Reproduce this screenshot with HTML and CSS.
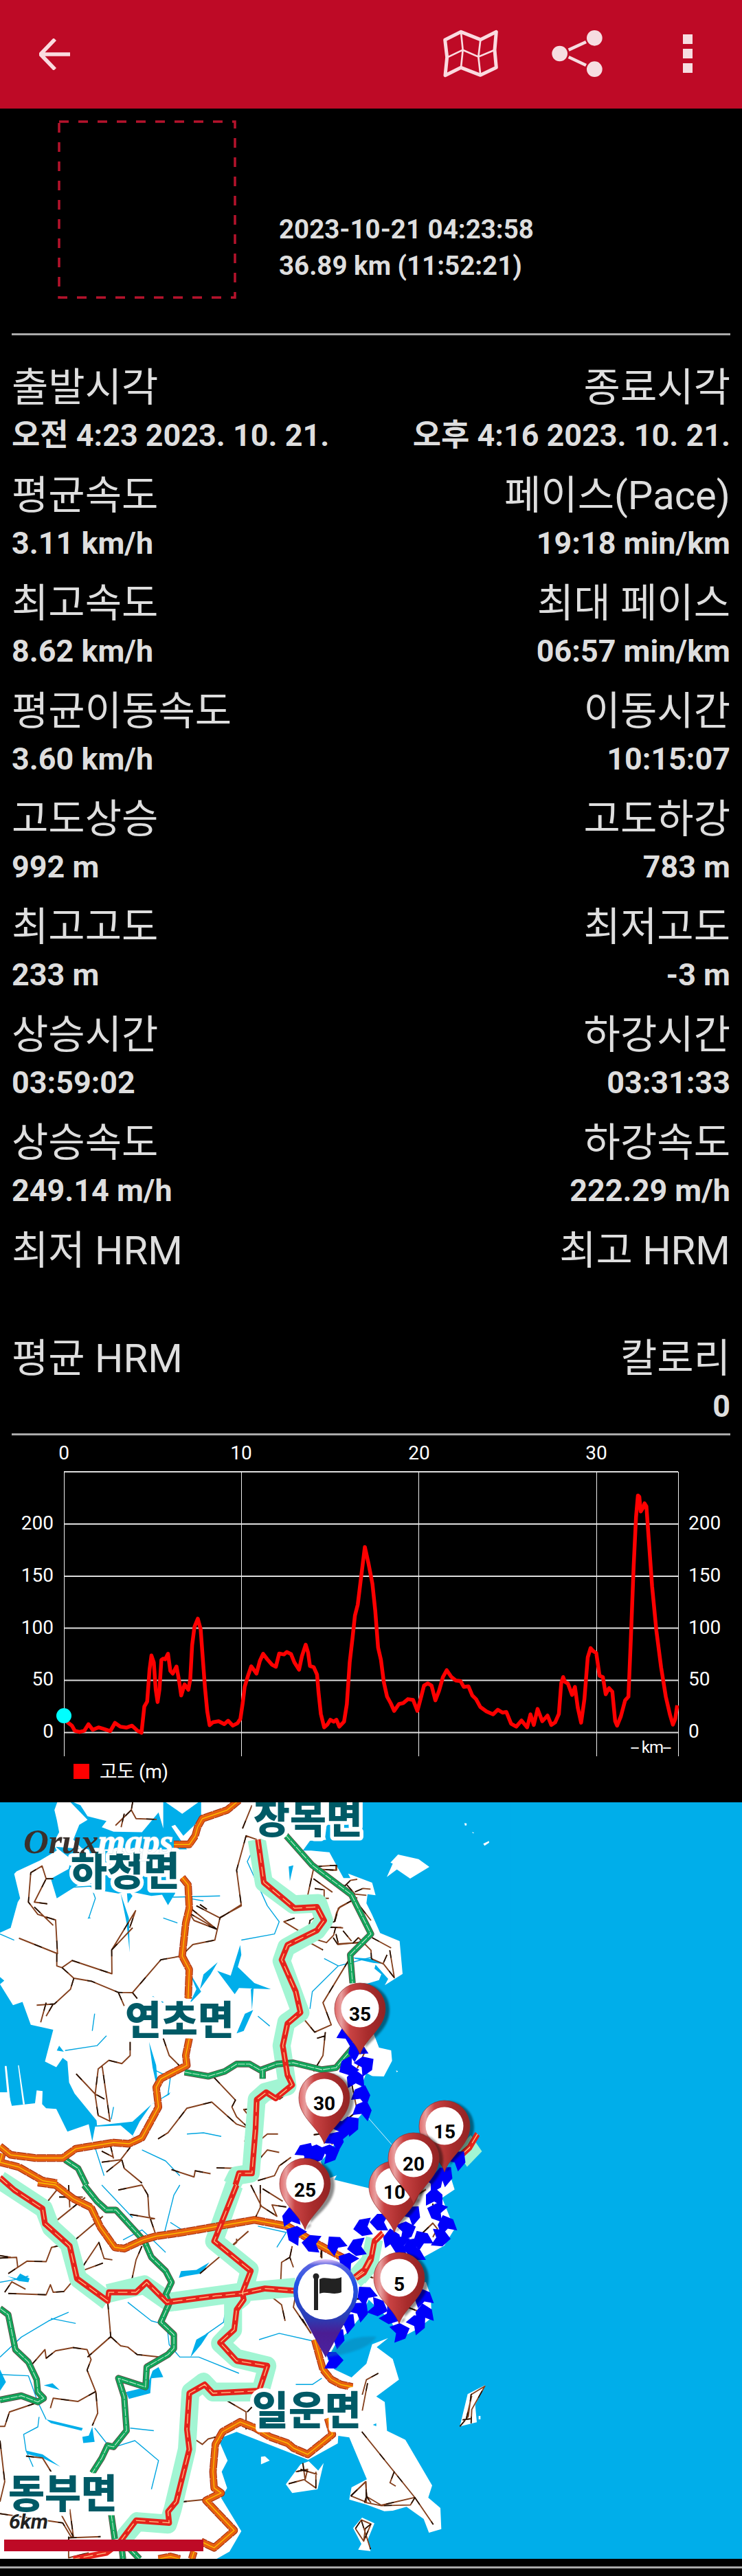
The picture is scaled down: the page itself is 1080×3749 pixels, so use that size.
FILE: index.html
```html
<!DOCTYPE html>
<html lang="ko">
<head>
<meta charset="utf-8">
<title>OruxMaps</title>
<link rel="stylesheet" href="styles.css">
</head>
<body>
<header class="bar">
  <svg class="icon-back" viewBox="0 0 46 46"><path d="M23 1 2 23 23 45M3 23H45"/></svg>
  <svg class="icon-actions" viewBox="620 20 460 120">
    <g transform="translate(620 20) scale(.33333)">
      <path class="map-edge" d="M83 114 153 79 238 113 307 79 300 158 307 235 238 268 153 235 84 269 92 190Z"/>
      <path class="map-fold" d="M153 80 161 158 153 235M238 114 229 188 238 268M94 190 161 158 229 188 300 158"/>
      <path class="share-line" d="M623 158 699 123M623 189 699 225"/>
      <g class="solid"><circle cx="584" cy="174" r="34"/><circle cx="736" cy="106" r="34"/><circle cx="736" cy="242" r="34"/><path d="M1122 90h42v42h-42zM1122 153h42v42h-42zM1122 216h42v42h-42z"/></g>
    </g>
  </svg>
</header>

<section class="summary">
  <svg class="photo" viewBox="0 0 260 260"><rect x="2" y="2" width="256" height="256"/></svg>
  <div class="summary-text"><p>2023-10-21 04:23:58</p><p>36.89 km (11:52:21)</p></div>
</section>

<dl class="stats">
  <div><dt>출발시각</dt><dd>오전 4:23 2023. 10. 21.</dd></div><div><dt>종료시각</dt><dd>오후 4:16 2023. 10. 21.</dd></div>
  <div><dt>평균속도</dt><dd>3.11 km/h</dd></div><div><dt>페이스(Pace)</dt><dd>19:18 min/km</dd></div>
  <div><dt>최고속도</dt><dd>8.62 km/h</dd></div><div><dt>최대 페이스</dt><dd>06:57 min/km</dd></div>
  <div><dt>평균이동속도</dt><dd>3.60 km/h</dd></div><div><dt>이동시간</dt><dd>10:15:07</dd></div>
  <div><dt>고도상승</dt><dd>992 m</dd></div><div><dt>고도하강</dt><dd>783 m</dd></div>
  <div><dt>최고고도</dt><dd>233 m</dd></div><div><dt>최저고도</dt><dd>-3 m</dd></div>
  <div><dt>상승시간</dt><dd>03:59:02</dd></div><div><dt>하강시간</dt><dd>03:31:33</dd></div>
  <div><dt>상승속도</dt><dd>249.14 m/h</dd></div><div><dt>하강속도</dt><dd>222.29 m/h</dd></div>
  <div><dt>최저 HRM</dt><dd></dd></div><div><dt>최고 HRM</dt><dd></dd></div>
  <div><dt>평균 HRM</dt><dd></dd></div><div><dt>칼로리</dt><dd>0</dd></div>
</dl>

<svg class="chart" viewBox="0 2089 1080 534">
  <path class="grid" d="M93 2142H987M93 2218H987M93 2294H987M93 2369.500H987M93 2445.500H987M93 2521.500H987"/>
  <path class="grid thin" d="M93.500 2142V2556M351.500 2142V2556M609.500 2142V2556M868.500 2142V2556M987.500 2142V2556"/>
  <g class="mid"><text x="93" y="2124">0</text><text x="351" y="2124">10</text><text x="610" y="2124">20</text><text x="868" y="2124">30</text></g>
  <g class="end"><text x="78" y="2226">200</text><text x="78" y="2302">150</text><text x="78" y="2377.500">100</text><text x="78" y="2453">50</text><text x="78" y="2529">0</text></g>
  <g><text x="1002" y="2226">200</text><text x="1002" y="2302">150</text><text x="1002" y="2377.500">100</text><text x="1002" y="2453">50</text><text x="1002" y="2529">0</text></g>
  <g transform="translate(0 2080) scale(.68878 .35714)"><path class="track" d="M135 1168 143 1195 152 1208 158 1229 168 1234 178 1229 187 1202 196 1225 208 1215 220 1222 233 1230 243 1197 254 1212 267 1216 279 1208 290 1228 299 1237 305 1130 311 1110 316 980 320 922 325 950 329 1060 333 1112 337 1060 341 940 345 935 349 938 355 915 360 985 365 996 373 967 378 1020 383 1085 390 1040 398 1062 402 1020 406 880 411 805 418 772 424 815 428 920 433 1050 438 1150 443 1206 450 1194 462 1190 474 1202 482 1188 492 1208 502 1198 508 1180 513 1115 517 1050 524 1005 531 966 542 996 549 945 556 915 565 938 575 960 583 968 590 914 600 918 606 908 615 916 622 950 632 980 638 925 646 878 651 910 655 965 663 970 670 1000 673 1070 678 1160 685 1215 692 1203 698 1184 705 1192 711 1184 717 1212 727 1192 733 1120 739 950 745 850 750 760 756 715 762 620 771 480 779 550 787 630 793 740 799 890 805 940 811 1030 818 1090 826 1118 833 1148 843 1120 852 1116 862 1100 873 1103 882 1148 890 1090 896 1045 904 1036 912 1045 920 1105 928 1065 936 1010 944 982 954 1010 963 1024 973 1026 980 1050 990 1048 998 1085 1006 1100 1015 1132 1028 1150 1042 1162 1052 1143 1062 1155 1070 1152 1080 1200 1091 1212 1102 1187 1114 1215 1121 1162 1128 1205 1136 1140 1146 1190 1157 1167 1165 1205 1173 1195 1181 1160 1186 1035 1190 1010 1194 1030 1200 1036 1209 1083 1215 1050 1221 1135 1228 1196 1235 1100 1242 930 1248 892 1254 905 1260 912 1267 1005 1274 1010 1280 1080 1287 1055 1294 1070 1300 1190 1304 1208 1312 1170 1321 1105 1328 1090 1333 860 1339 560 1344 360 1348 270 1351 275 1354 335 1359 320 1362 302 1366 315 1371 450 1378 640 1387 820 1397 970 1407 1090 1416 1165 1422 1204 1427 1180 1431 1125"/></g>
  <circle cx="93" cy="2497" r="11" fill="#0ff"/>
  <text class="unit" x="918" y="2551" textLength="59">-- km--</text>
  <path fill="red" d="M107 2567h23v22h-23z"/><text class="legend" x="145" y="2588" textLength="100">고도 (m)</text>
</svg>

<svg class="map" viewBox="0 0 1080 1101">
  <defs>
    <linearGradient id="red"><stop offset="0" stop-color="#e06a6a"/><stop offset=".13" stop-color="#e8a0a0"/><stop offset=".3" stop-color="#c94343"/><stop offset=".65" stop-color="#a82c2c"/><stop offset="1" stop-color="#922323"/></linearGradient>
    <linearGradient id="violet" x2="0" y2="1"><stop offset="0" stop-color="#e8c8f8"/><stop offset=".06" stop-color="#5a64e0"/><stop offset=".25" stop-color="#2052e6"/><stop offset=".6" stop-color="#2b3db4"/><stop offset=".75" stop-color="#4b1d93"/><stop offset="1" stop-color="#4a22a0"/></linearGradient>
    <filter id="soft" x="-50%" y="-50%" width="200%" height="200%"><feGaussianBlur stdDeviation="1.500"/></filter>
    <g id="pin">
      <path d="M1 0C12-20 43-34 43-65C43-90 22-103 5-103L8-5Z" opacity=".45" filter="url(#soft)"/>
      <path d="M0 0C-8-24-37-38-37-67A37 37 0 0 1 37-67C37-38 8-24 0 0Z" fill="url(#red)" stroke="#8e2b2b" stroke-width=".7"/>
      <circle cy="-67" r="27.500" fill="#fff"/>
    </g>
    <path id="arrow" d="M-14-12H2L13 0 2 12H-15L-8 0Z"/>
  </defs>

  <!-- land and sea -->
  <path fill="#fff" d="M0 0H740V1101H0Z"/>
  <g class="sea">
    <g transform="translate(480 -3) scale(.33333)"><path d="M790 0V1265H130L160 1190 225 1227 272 1138 268 1092 215 1080 190 1015 230 930 200 830 120 800 165 800 215 785 225 760 195 735 200 718 255 780 240 808 318 758 305 615 220 580 185 500 160 450 165 410 200 415 185 360 80 320 90 340 60 340 0 230 -20 160 0 0ZM100 686 178 692 235 715 190 710 110 692Z"/></g>
    <g transform="translate(300 237) scale(.33333 .40816)"><path d="M1330 410V1190H985L960 1130 740 1140 735 1070 800 1045 930 1050 1040 1000 1085 940 1060 890 1030 830 1085 800 1060 735 960 770 900 790 710 795 560 765 570 750 535 760 500 700 540 665 590 600 655 555 700 510 690 430 700 395Z"/></g>
    <g transform="translate(440 717) scale(.33333)"><path d="M905-15H560L565 100 500 150 425 190 385 110 330 60 290 20 260 90 200 160 150 205 110 280 140 325 215 360 280 300 305 215 375 188 325 228 395 280 422 370 323 443 360 467 370 593 450 632 567 832 550 885 603 930 607 1022 553 1038 530 978 455 925 395 942 358 944 280 915 205 893 215 840 282 805 205 622 157 615 155 648 25 720V1155H905ZM308 567 323 560V573Z"/></g>
    <g transform="translate(0 557) scale(.34439 .36288)"><path d="M1310 1105 1000 990 945 1010 930 1035 962 1105 937 1150 960 1215 935 1255 1020 1388 970 1470 905 1505H1315ZM532 830 620 810 645 745 670 730 690 770 640 775 635 835 545 858ZM348 1010 375 1005 390 970 400 1030 352 1035ZM0 740 25 790 0 825ZM185 803 222 795 252 822ZM756 372 765 345 830 340 885 310 850 355 785 365ZM805 690 830 620 885 590 850 640ZM30 365 70 375 85 355 125 375 120 390 80 385ZM195 940 350 975 345 985 215 955ZM110 1065 180 1080 255 1130 180 1095 120 1080Z"/></g>
    <g transform="translate(0 -3) scale(.34439 .35714)"><path d="M0 0H245L230 40 240 80 250 130 225 175 240 205 170 245 70 290 60 300 85 400 75 415 45 520 0 540ZM290 0 370 80 335 100 310 160 350 200H790L720 100 690 115 670 50 600 130 480 128 430 110 450 85 370 65 340 20ZM688 0H850L770 55ZM235 190 300 240 290 280 215 320 240 400 330 345 385 340 440 370 500 380 540 370 640 390 685 385 710 428 740 380 745 230ZM690 0V120L740 100 775 145 850 75V0ZM1310 165 1280 205 1315 205 1400 213 1430 280 1568 310V150ZM0 720 18 735 0 750ZM0 750 55 835 95 822 130 915 225 935 190 1065 238 1088 265 1050 285 1065 292 1150 315 1195 408 1305 410 1325 560 1310 640 1240 720 1190 715 1200 640 1240 590 1310 560 1368 575 1378 510 1325 402 1330 390 1390 375 1320 285 1350 238 1258 195 1255 178 1238 180 1185 155 1182 148 1235 50 1245 35 1190 0 1190ZM918 695 975 715 1015 590 1020 630 1005 680 1075 745 1145 770 1010 765 992 790ZM845 770 860 710 920 660 890 710ZM510 380 545 480 548 620 535 500ZM1000 950 1035 870 1070 855 1030 940ZM800 700 850 780 800 830 830 770ZM1220 270 1240 265 1225 330ZM250 1000 270 1025 240 1020ZM375 475 385 480 370 483ZM1060 770 1072 765 1065 855ZM630 985 660 1080 670 1200 645 1090ZM535 360 560 390 540 420Z"/></g>
  </g>
  <g transform="translate(0 -3) scale(.34439 .35714)" fill="#fff"><path d="M20 1083 28 1083 45 1240 35 1240ZM76 1080 80 1080 105 1240H97Z"/></g>
  <g class="isles">
    <g transform="translate(480 -3) scale(.33333)"><path d="M265 272 298 237 388 257 435 291 351 342 293 302 249 335 275 277ZM588 100 598 101 597 110H590ZM622 138 631 143 624 144ZM670 190 695 178 696 185 676 199ZM289 1180 298 1183 293 1188Z"/></g>
    <g transform="translate(440 717) scale(.33333)"><path d="M722 433 798 394 755 480 762 556 688 574ZM770 528H778V543H770ZM222 1018 261 972 315 997 285 1070 298 1118 244 1112 258 1087Z"/></g>
    <g transform="translate(0 557) scale(.34439 .36288)"><path d="M1270 1120 1305 1108 1345 1145 1368 1115 1342 1220 1235 1235 1208 1200ZM1103 1090 1120 1088 1140 1105 1103 1120Z"/></g>
  </g>
  <path d="M535 458 570 498" stroke="#dff3fb"/>

  <!-- streams -->
  <g class="stream">
    <g transform="translate(0 -3) scale(.34439 .35714)"><path d="M1060 220 1045 250 1130 430 1180 495 1160 545 1020 570 M730 395 930 390M1370 645 1430 675 1568 640M1430 675 1320 780 1310 850M300 355 385 350 403 400 375 480M275 1020 410 1000 450 960 M790 1360 860 1355 935 1370M600 1425 700 1470 760 1530M400 1410 440 1530 M655 1100 720 1130 710 1200 M480 1250 470 1300 M690 480 750 500M1090 880 1140 920M0 545 60 570M645 800 700 830M400 870 390 940 M860 410 800 400"/></g>
    <g transform="translate(0 557) scale(.34439 .36288)"><path d="M0 690 90 610 205 545 290 510M215 535 320 555M0 760 120 765 160 870 195 940M165 930 160 970 100 1000 110 1065 140 1130M470 1055 570 1025 670 1105 640 1220M550 975 650 985M540 470 640 545 680 555M705 560 715 640 760 690 840 690 1010 755M950 520 945 550 870 600M400 975 450 1035M1095 620 1180 595 1320 625M1250 800 1320 800 1360 775M520 220 600 180 640 215 700 270M690 210 735 40 760 0M720 150 770 180M430 0 560 130M1170 250 1210 190 1090 165M0 390 60 380 120 365"/></g>
  </g>

  <!-- minor roads, with darker stretches laid over them -->
  <defs>
    <g id="minor">
    <g transform="translate(0 -3) scale(.34439 .35714)"><path d="M562 0 555 40 575 75 662 78M555 40 488 103M525 55 512 110M200 422 145 415 195 320 178 268 130 295 120 415 160 465 235 488 243 625 80 562M225 320 195 320M145 435 225 510M240 625V675L262 682 305 653 473 707 472 610 573 450 548 520M472 610 560 520M262 682 312 725 388 738 500 783 560 784 680 650 765 635M312 725 298 770 230 830 155 835M225 830 195 880M195 825 172 905M500 783 525 838M560 784 580 808M690 970 715 1040 775 1098M550 985V1040L515 1073 460 1060 415 1095 402 1200 415 1285 465 1308 432 1085M322 1115 402 1197 442 1218M765 635 815 588 908 570 930 478 1020 430 1000 285 1040 145 1085 160M1025 115 1065 20M805 440 915 525 800 460 820 490 915 525M830 430 930 480 1020 425M845 425 875 445M905 1130 995 1222 980 1250 1000 1290 1050 1335M668 1380 710 1355 790 1255 895 1230 1000 1320 1070 1343M1245 440 1265 395 1300 390 1325 280 1420 285V265L1335 270M1325 320 1405 375M1330 360 1370 365V400H1390M1245 480 1200 495 1260 530 1290 570 1365 610M1305 520 1310 490 1345 470M1310 560 1380 580 1410 550 1418 520M1370 515 1450 520M1420 545 1430 585 1540 580M1475 650 1365 825 1400 915 1330 945 1270 875M1375 945 1365 1040 1325 1105M1340 970 1375 960M1215 1115 1180 1170 1225 1185 1180 1220M1070 1258 1030 1260 1055 1290 1035 1390 1065 1395M1080 1400 1130 1360H1175M1085 1475 1130 1425 1180 1435M1090 1550 1160 1530 1180 1490 1230 1455M915 1498 1010 1500M725 1505 820 1535 825 1510 890 1522M430 1475 510 1465 550 1415M450 1515 515 1465M430 1430 480 1455M465 1400 480 1460M515 1465 525 1500 600 1560M1415 495 1430 440 1505 400"/></g>
    <g transform="translate(480 -3) scale(.33333)"><path d="M0 535 20 530 30 490 45 465 120 425M65 375 90 350 120 345M75 370 110 410 160 415M110 400 145 385 178 388M60 370 180 525M15 600 35 630 130 620M0 555H50M58 570 95 615M100 625 125 600 180 655 182 692 235 715 282 775 262 655M185 600 268 645M250 675 232 715M0 285H30V305H0M90 1120 150 1080 155 1095 120 1170 M80 1180 100 1230"/></g>
    <g transform="translate(300 237) scale(.33333 .40816)"><path d="M635 420 660 520 600 560M550 600 550 640M470 605 510 600M870 875 900 830 960 800M945 955 990 920 1010 940 990 970M990 850V880M655 1190 700 1190M690 1105 730 1115M715 1045 755 1060M880 1220 930 1235 945 1270M505 1045V1000"/></g>
    <g transform="translate(440 717) scale(.33333)"><path d="M0 105 38 168M332 342 280 370 262 435M285 385 262 505M260 597 492 885 572 1002M402 770 383 820 408 835M212 877 278 815 280 905 212 877M272 905 280 880 345 918 492 884 472 917 345 920 270 905M688 574 725 530 737 435 797 398 740 500 737 560M715 545 740 440M700 545 740 540M232 1020 258 982 300 1000 268 1075 232 1020M258 985 298 1110 M300 1000 275 1020 268 1075"/></g>
    <g transform="translate(0 557) scale(.34439 .36288)"><path d="M0 293 70 290 75 330M0 283 45 290M35 355 115 305 195 307 218 250 290 235M20 430 50 388 108 418M35 435 195 440 213 400 225 430 270 427 330 360M210 165 360 50M250 48H350M290 0 295 90M185 85 240 20 220 0M305 230 435 125M435 313 335 348 418 230 440 295 475 300M500 20 600 0 625 40 630 120 655 190M550 118 655 135M600 245 575 300 555 390 470 425M455 465 468 608 370 690M468 608 510 645 540 650 580 680 680 690M130 725 190 660 195 695 235 665 310 652 368 660 385 700 368 742 405 830 413 915 390 965M405 828 330 868 225 855 213 895M150 875 40 910 20 968H0M110 1087 180 1095 218 1153M0 1025 20 1190 0 1270M0 1318 265 1355 300 1410 310 1410 295 1300M240 1290 310 1410M290 1410V1495L375 1475M290 1415 425 1410M800 1005 855 1040 880 1018 935 1005M1040 980V910L915 840M1045 910 1065 890M755 1272 900 1258M845 355 1000 230V215M960 260 1050 185M1110 420 1190 480 1205 545M1185 415 1190 310 1225 290 1240 330M1225 290 1235 245M1255 410 1240 490 1315 595M1360 245 1355 290M1060 0 1105 85 1170 125 1150 80 1210 88M1100 0V90L1080 130M1110 15 1195 65M1220 1198 1290 1180 1300 1140 1250 1150M1280 1115 1290 1185 1335 1215V1150M1270 1140 1340 1160M1485 1245 1545 1190 1550 1250 1568 1275"/></g>
    </g>
  </defs>
  <use href="#minor" class="minor"/><use href="#minor" class="minor-dark"/>

  <!-- route halos -->
  <g class="halo">
    <g transform="translate(0 -3) scale(.34439 .35714)"><path d="M1085 160 1115 335 1240 425 1345 420 1370 490 1340 530 1210 600 1190 655 1270 865 1210 905 1190 1000 1215 1165 1120 1190 1085 1220 1060 1520 1000 1530 980 1568"/></g>
    <g transform="translate(0 557) scale(.34439 .36288)"><path d="M0-20 185 95 215 170 290 235 330 375 455 465M455 435 610 400 715 470 1020 430 1250 410M990 0 905 225 1055 340 1025 450 985 480V580L930 635 1000 695 1130 725 1100 830 900 830 860 790 805 830 790 1060 730 1300 710 1360 580 1350 510 1430M1568 310 1515 370"/></g>
    <g transform="translate(300 237) scale(.33333 .40816)"><path d="M735 975 715 1060 650 1120M1115 690 1180 635"/></g>
  </g>

  <!-- green roads -->
  <g class="g-case"><g transform="translate(0 -3) scale(.34439 .35714)"><path id="ga" d="M1205 140 1320 265 1485 385 1568 545 1480 630 1490 745M780 1108 880 1125 950 1105 1000 1075 1055 1075 1100 1100 1170 1075 1240 1070 1360 1098 1420 1090 1490 1010M1110 1100V1135M275 1465 330 1500 365 1568"/></g><g transform="translate(0 557) scale(.34439 .36288)"><path id="gb" d="M355 0 410 65 450 100 490 100 610 225 640 290 700 345 725 390 700 440 715 475 680 550 735 600 735 655 710 680 620 730 615 810 500 775 525 850 535 985 480 1050 455 1045 430 1095 390 1155M470 1320 485 1420M515 1460 520 1500M550 1460 590 1500M0 495 35 520 65 660 120 710 155 780 160 830 185 855 160 870 90 845 0 862"/></g></g>
  <g class="g-road"><g transform="translate(0 -3) scale(.34439 .35714)"><use href="#ga"/></g><g transform="translate(0 557) scale(.34439 .36288)"><use href="#gb"/></g></g>
  <g class="g-mid"><g transform="translate(0 -3) scale(.34439 .35714)"><use href="#ga"/></g><g transform="translate(0 557) scale(.34439 .36288)"><use href="#gb"/></g></g>

  <!-- orange roads -->
  <g class="o-case"><g transform="translate(0 -3) scale(.34439 .35714)"><path id="oa" d="M1010 0 960 40 855 75 835 110 825 145 800 180 735 180M770 315 795 345 800 440 785 500 770 635 800 690 795 808M800 970 785 1040 790 1080 680 1135 660 1170 670 1250 600 1375 545 1400 480 1395 320 1420 265 1458 150 1458 45 1445 0 1410M0 1475 80 1495 180 1550 240 1560M10 1440 0 1475"/></g><g transform="translate(0 557) scale(.34439 .36288)"><path id="ob" d="M160-10 235 0 310 55 385 90 425 170 485 250 525 255 605 220 660 205 770 190 1075 140 1215 165 1330 230 1485 310M1330 620 1365 740 1400 780 1440 800 1490 810M1385 935 1405 1000 1360 1035 1300 1080 1240 1055 1215 1035 1140 1010 1080 975 1015 950 940 990 910 1040 900 1150 905 1215 935 1235 870 1265 925 1320 990 1385 905 1455 850 1430M820 1470 810 1500M670 1500 720 1490 760 1500"/></g></g>
  <g class="o-road"><g transform="translate(0 -3) scale(.34439 .35714)"><use href="#oa"/></g><g transform="translate(0 557) scale(.34439 .36288)"><use href="#ob"/></g></g>
  <g class="o-mid"><g transform="translate(0 -3) scale(.34439 .35714)"><use href="#oa"/></g><g transform="translate(0 557) scale(.34439 .36288)"><use href="#ob"/></g></g>

  <!-- red roads -->
  <g class="r-road"><g transform="translate(0 -3) scale(.34439 .35714)"><path id="ra" d="M1090 160 1115 335 1245 440 1340 435 1370 490 1340 530 1215 590 1190 650 1250 780 1270 865 1215 910 1195 1000 1215 1120 1235 1160 1165 1215 1125 1190 1085 1220 1080 1340 1065 1520 1010 1520 995 1568"/></g><g transform="translate(0 557) scale(.34439 .36288)"><path id="rb" d="M0-30 60 20 180 95 190 155 295 245 325 375 455 465 460 430 575 430 620 390 705 470 910 445 1020 435 1120 415 1260 425M1000 0 905 225 1060 345 1025 430 1030 460 1000 500 990 580 930 632 1000 705 1130 725 1095 825 900 835 865 800 800 835 790 980 800 1060 745 1270 710 1310 715 1355 575 1345 500 1440 450 1475 310 1500M1500 370 1540 340 1568 290"/></g><g transform="translate(300 237) scale(.33333 .40816)"><path id="rc" d="M772 955 735 985 720 1050 690 1095 655 1115M1185 602 1150 650 1090 695"/></g></g>
  <g class="r-mid"><g transform="translate(0 -3) scale(.34439 .35714)"><use href="#ra"/></g><g transform="translate(0 557) scale(.34439 .36288)"><use href="#rb"/></g><g transform="translate(300 237) scale(.33333 .40816)"><use href="#rc"/></g></g>

  <g class="place"><text x="369" y="45">장목면</text><text x="103" y="121">하청면</text><text x="182" y="338">연초면</text><text x="367" y="906">일운면</text><text x="12" y="1027">동부면</text></g>

  <!-- recorded direction arrows -->
  <g fill="#0000fa">
    <use href="#arrow" transform="translate(507 337) rotate(-60)"/><use href="#arrow" transform="translate(518 360) rotate(-125)"/><use href="#arrow" transform="translate(533 381) rotate(-35)"/><use href="#arrow" transform="translate(505 386) rotate(150)"/><use href="#arrow" transform="translate(517 401) rotate(-95)"/><use href="#arrow" transform="translate(527 424) rotate(-70)"/><use href="#arrow" transform="translate(529 446) rotate(-70)"/><use href="#arrow" transform="translate(512 468) rotate(-40)"/><use href="#arrow" transform="translate(500 474) rotate(-40)"/><use href="#arrow" transform="translate(489 490) rotate(-60)"/><use href="#arrow" transform="translate(482 510) rotate(-20)"/><use href="#arrow" transform="translate(463 510) rotate(-20)"/><use href="#arrow" transform="translate(446 507) rotate(-60)"/><use href="#arrow" transform="translate(452 515)"/>
    <use href="#arrow" transform="translate(423 602) rotate(-100)"/><use href="#arrow" transform="translate(428 628) rotate(-150)"/><use href="#arrow" transform="translate(452 642) rotate(-175)"/><use href="#arrow" transform="translate(487 642) rotate(-130)"/><use href="#arrow" transform="translate(518 648) rotate(170)"/><use href="#arrow" transform="translate(504 667) rotate(-150)"/><use href="#arrow" transform="translate(527 619) rotate(170)"/><use href="#arrow" transform="translate(551 611) rotate(180)"/>
    <use href="#arrow" transform="translate(667 518) rotate(-50)"/><use href="#arrow" transform="translate(648 541) rotate(-50)"/><use href="#arrow" transform="translate(634 551) rotate(-30)"/><use href="#arrow" transform="translate(632 573) rotate(-90)"/><use href="#arrow" transform="translate(634 595) rotate(-160)"/><use href="#arrow" transform="translate(649 613) rotate(-110)"/><use href="#arrow" transform="translate(643 634) rotate(5)"/><use href="#arrow" transform="translate(613 635) rotate(-120)"/><use href="#arrow" transform="translate(593 622) rotate(-20)"/><use href="#arrow" transform="translate(601 598) rotate(-50)"/><use href="#arrow" transform="translate(598 648) rotate(170)"/><use href="#arrow" transform="translate(580 644) rotate(190)"/><use href="#arrow" transform="translate(570 633) rotate(-100)"/><use href="#arrow" transform="translate(602 659) rotate(-120)"/>
    <use href="#arrow" transform="translate(531 715) rotate(-130)"/><use href="#arrow" transform="translate(552 736) rotate(20)"/><use href="#arrow" transform="translate(525 738) rotate(-50)"/><use href="#arrow" transform="translate(506 755) rotate(-50)"/><use href="#arrow" transform="translate(491 777) rotate(-50)"/><use href="#arrow" transform="translate(487 812)"/><use href="#arrow" transform="translate(570 748) rotate(30)"/><use href="#arrow" transform="translate(584 770) rotate(-20)"/><use href="#arrow" transform="translate(609 757) rotate(-40)"/><use href="#arrow" transform="translate(617 742) rotate(-100)"/><use href="#arrow" transform="translate(615 719) rotate(-110)"/>
  </g>

  <!-- kilometre pins -->
  <g class="km">
    <use href="#pin" x="524" y="367"/><text x="524" y="318">35</text>
    <use href="#pin" x="472" y="497"/><text x="472" y="448">30</text>
    <use href="#pin" x="444" y="622"/><text x="444" y="574">25</text>
    <use href="#pin" x="647" y="538"/><text x="647" y="489">15</text>
    <use href="#pin" x="574" y="626"/><text x="574" y="577">10</text>
    <use href="#pin" x="602" y="585"/><text x="602" y="536">20</text>
    <use href="#pin" x="581" y="759"/><text x="581" y="711">5</text>
  </g>
  <path d="M474 808C490 790 510 775 548 778C535 798 500 803 474 808Z" fill="#087caa" opacity=".45" filter="url(#soft)"/>
  <path d="M474 808 437 741A47 47 0 1 1 511 741Z" fill="url(#violet)"/>
  <circle cx="474" cy="712.500" r="40.500" fill="#fff"/>
  <path fill="#222" d="M457 690h6v49h-6zM465 694c10-5 18 3 32-3v22c-13 5-21-2-32 2z"/><circle cx="460" cy="690" r="4.500" fill="#222"/>

  <text class="logo" x="34" y="74" textLength="218"><tspan fill="#3a302c">Orux</tspan><tspan class="logo-light">maps</tspan></text>
  <text class="scale" x="13" y="1057" textLength="57">6km</text>
  <path fill="#be0a26" d="M6 1073h290v17H6z"/>
</svg>
<footer class="foot"></footer>
</body>
</html>
```

FILE: styles.css
```css
* { box-sizing: border-box; margin: 0; padding: 0; }
body { width: 1080px; background: #000; color: #dedede; font-family: Roboto, "Noto Sans CJK KR", sans-serif; }
svg { display: block; }

.bar { height: 158px; background: #be0a26; display: flex; justify-content: space-between; align-items: flex-start; }
.icon-back { width: 46px; height: 46px; margin: 56px 0 0 57px; fill: none; stroke: #fadbe0; stroke-width: 5.500; }
.icon-actions { width: 460px; height: 120px; margin-top: 20px; fill: none; stroke: #fadbe0; }
.map-edge { stroke-width: 15; stroke-linejoin: round; }
.map-fold { stroke-width: 8; }
.share-line { stroke-width: 14; stroke: #f6dde1; }
.solid { fill: #f6dde1; stroke: none; }

.summary { display: flex; gap: 62px; height: 330px; margin: 0 17px; padding: 17px 0 0 67px; border-bottom: 3px solid #aaa; }
.photo { width: 260px; height: 260px; fill: none; stroke: #b5132c; stroke-width: 3.500; stroke-dasharray: 14 14; }
.summary-text { padding-top: 132px; font-size: 38.500px; font-weight: 700; line-height: 53px; }

.stats { display: grid; grid-template-columns: 1fr 1fr; grid-auto-rows: 157px; height: 1601px; margin: 0 17px; padding-top: 33px; border-bottom: 3px solid #aaa; white-space: nowrap; }
.stats > :nth-child(even) { text-align: right; }
.stats dt { font-size: 58px; line-height: 87px; }
.stats dd { padding-top: 2px; font-size: 44.900px; line-height: 48px; font-weight: 700; }

.chart { width: 1080px; height: 534px; }
.chart text { fill: #fff; font-size: 28px; }
.chart .unit { font-size: 24px; }
.mid { text-anchor: middle; }
.end { text-anchor: end; }
.grid { stroke: #ddd; stroke-width: 2; fill: none; }
.grid.thin { stroke: #eee; stroke-width: 1; }
.track { fill: none; stroke: red; stroke-width: 5.500; stroke-linejoin: round; vector-effect: non-scaling-stroke; }

.map { width: 1080px; height: 1101px; background: #00aeea; overflow: hidden; }
.sea { fill: #00aeea; }
.isles { fill: #fff; }
.map path { stroke-linejoin: round; }
.stream, .minor, .minor-dark, .halo, .g-case, .g-road, .g-mid, .o-case, .o-road, .o-mid, .r-road, .r-mid { fill: none; }
.stream { stroke: #00a5e0; stroke-width: 4; }
.minor { stroke: #84401d; stroke-width: 5.500; }
.minor-dark { stroke: #1d0f06; stroke-width: 4.500; stroke-dasharray: 34 90; }
.halo { stroke: #a2f5d3; stroke-width: 76; }
.g-case { stroke: #5c4b42; stroke-width: 27; }
.g-road { stroke: #11a45a; stroke-width: 22; }
.g-mid { stroke: #c4f0d4; stroke-width: 3; stroke-dasharray: 30 4; }
.o-case { stroke: #a32b12; stroke-width: 31; stroke-dasharray: 40 2; }
.o-road { stroke: #e66010; stroke-width: 25; }
.o-mid { stroke: #ffc800; stroke-width: 3.500; }
.r-road { stroke: #e5231b; stroke-width: 24; }
.r-mid { stroke: #ffc98a; stroke-width: 3.500; stroke-dasharray: 40 16; }
.place { font: 900 57.500px "Noto Sans CJK KR", sans-serif; fill: #005a66; stroke: #fff; stroke-width: 11px; paint-order: stroke; stroke-linejoin: round; }
.km { font-size: 28px; font-weight: 700; text-anchor: middle; }
.logo { font: italic 700 51px "Liberation Serif", serif; }
.logo-light { fill: #fff; stroke: #dbe7ec; stroke-width: 1.500px; paint-order: stroke; }
.scale { font-size: 30px; font-style: italic; font-weight: 700; fill: #222; stroke: #fff; stroke-width: 2px; paint-order: stroke; }
.foot { height: 14px; border-bottom: 3px solid #aaa; }
```
